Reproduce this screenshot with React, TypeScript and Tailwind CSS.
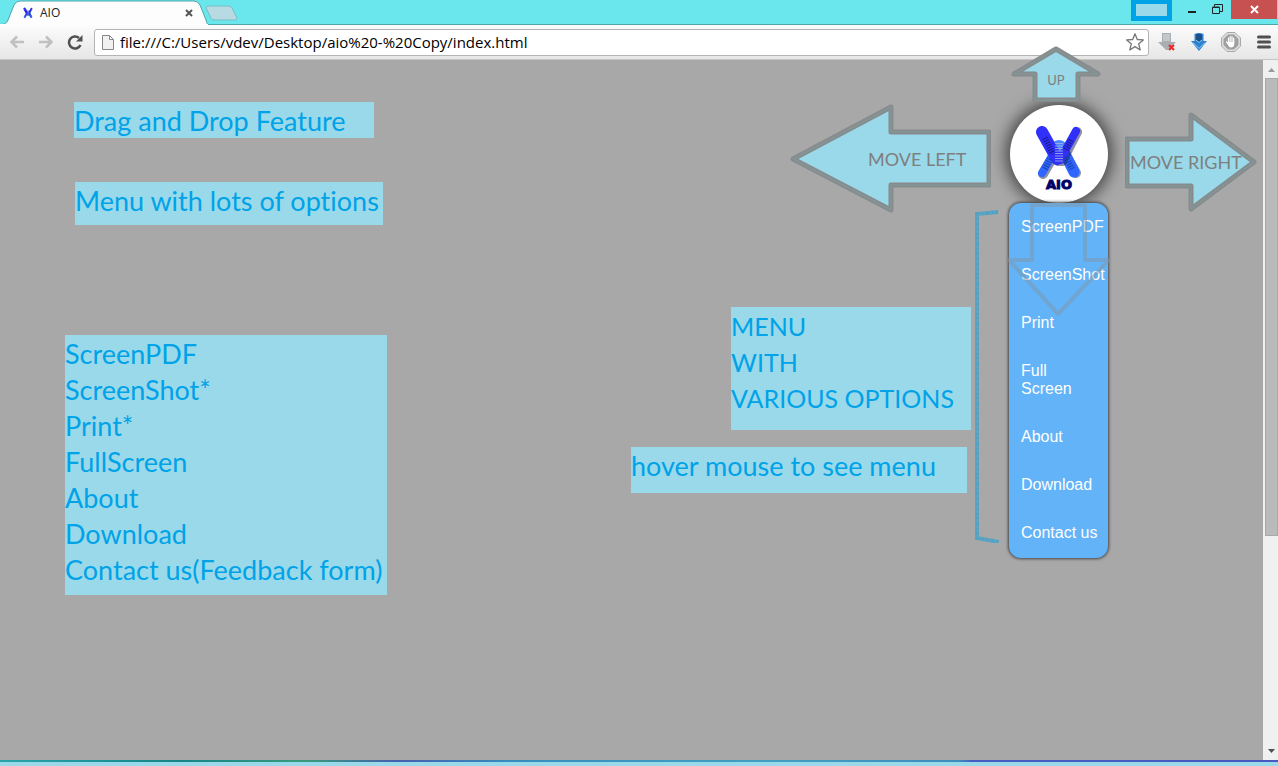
import React from "react";

const options = ["ScreenPDF", "ScreenShot", "Print", "Full Screen", "About", "Download", "Contact us"];
const features = ["ScreenPDF", "ScreenShot*", "Print*", "FullScreen", "About", "Download", "Contact us(Feedback form)"];

function Note({ className, children }: { className: string; children: React.ReactNode }) {
  return (
    <div className={`bg-[#99d9ea] pt-px font-['Lato',sans-serif] leading-9 whitespace-nowrap text-[#00a2e8] [font-variant-ligatures:none] ${className}`}>
      {children}
    </div>
  );
}

function Logo({ className, caption }: { className: string; caption?: boolean }) {
  return (
    <svg className={className} viewBox={caption ? "0 0 52 66" : "1 -2 50 58"} aria-hidden="true">
      <g strokeLinecap="round" strokeLinejoin="round" fill="none">
        <path d="M24 24L10 48M30 24L43 47" stroke="#1a2450" strokeWidth="10" opacity=".5" />
        <path d="M23 23L9 47" stroke="#2f66ff" strokeWidth="8" />
        <path d="M29 22L41 46" stroke="#2f66ff" strokeWidth="11" />
        <circle cx="26" cy="23" r="9" fill="#4a86ff" />
        <path d="M10 7L25 35M44 6L29 35" stroke="#1a1a50" strokeWidth="10" opacity=".5" />
        <path d="M9 6L24 33" stroke="#3030fa" strokeWidth="12" />
        <path d="M43 5L27 34" stroke="#3030fa" strokeWidth="8" />
        <path d="M12 12L20 28M38 14L32 25" stroke="#14146e" strokeWidth="6" strokeLinecap="butt" strokeDasharray="1 1.500" opacity=".8" />
        <path d="M26 17V36" stroke="#a9b4e4" strokeWidth="8" strokeLinecap="butt" strokeDasharray="1 1.500" opacity=".8" />
        <path d="M17 33L12 43M33 31L39 43" stroke="#173797" strokeWidth="6" strokeLinecap="butt" strokeDasharray="1 1.500" opacity=".8" />
      </g>
      {caption && (
        <text x="26" y="63" textAnchor="middle" fontFamily="DejaVu Sans" fontWeight="bold" fontSize="13" fill="#000066" stroke="#000066" strokeWidth="1">
          AIO
        </text>
      )}
    </svg>
  );
}

function TabStrip() {
  return (
    <header className="flex h-[25px] items-start border-b border-[#4fa5ad] bg-[#69e7ec] pr-px">
      <div className="relative mb-[-1px] flex h-[25px] w-52 shrink-0 items-center">
        <svg className="absolute inset-0 h-[25px] w-52" viewBox="0 0 208 25" aria-hidden="true">
          <path d="M0 24.500C5 24.500 7 23 8 20L14 5Q16 1 20 1H194Q198 1 200 5L206 20Q207 24.500 208 24.500V25H0Z" fill="#fdfdfd" stroke="#4fa5ad" />
          <path d="M0 25H208" stroke="#fdfdfd" strokeWidth="2" />
        </svg>
        <Logo className="relative ml-[23px] h-3 w-[10px]" />
        <span className="relative ml-[7px] font-['Open_Sans',sans-serif] text-xs text-[#222]">AIO</span>
        <button className="relative mr-[15px] ml-auto" aria-label="Close tab">
          <svg className="size-2" viewBox="0 0 8 8"><path d="M1 1L7 7M7 1L1 7" stroke="#555" strokeWidth="2" /></svg>
        </button>
      </div>
      <button className="mt-[5px] -ml-1" aria-label="New tab">
        <svg className="h-4 w-9" viewBox="0 0 36 16">
          <path d="M4 1H24Q27 1 28 3L33 13Q33 15 31 15H11Q8 15 7 13L2 3Q2 1 4 1Z" fill="#b8dbe3" stroke="#78bdc7" />
        </svg>
      </button>
      <div className="ml-auto flex items-start">
        <div className="h-[21px] w-[41px] border-[5px] border-t-4 border-[#00a2e8] bg-[#99d9ea]" />
        <button className="ml-4 flex h-[18px] w-2 items-center" aria-label="Minimize">
          <svg className="h-[18px] w-2" viewBox="0 0 8 18"><path d="M0 12H8" stroke="#222" strokeWidth="2" /></svg>
        </button>
        <button className="mt-1 ml-4" aria-label="Restore">
          <svg className="size-[11px]" viewBox="0 0 11 11" fill="none" stroke="#222">
            <path d="M.5 3.500H7.500V9.500H.5ZM.5 3H7.500M2.500 2.500V.5H10.500V7.500H8" />
          </svg>
        </button>
        <button className="ml-2 flex h-[19px] w-[46px] items-center justify-center bg-[#c75050]" aria-label="Close">
          <svg className="size-[9px]" viewBox="0 0 9 9"><path d="M1 1L8 8M8 1L1 8" stroke="#fff" strokeWidth="2" /></svg>
        </button>
      </div>
    </header>
  );
}

function Toolbar() {
  return (
    <div className="flex h-[35px] items-center border-b border-[#c4c4c4] bg-linear-to-b from-[#fcfcfc] to-[#e6e6e6] pr-[7px] pl-[9px]">
      <button aria-label="Back">
        <svg className="h-4 w-4" viewBox="0 0 16 16" fill="none"><path d="M8 2.500L2.500 8L8 13.500M3 8H15" stroke="#c0c0c0" strokeWidth="2.500" /></svg>
      </button>
      <button className="ml-[13px]" aria-label="Forward">
        <svg className="h-4 w-4" viewBox="0 0 16 16" fill="none"><path d="M8 2.500L13.500 8L8 13.500M13 8H1" stroke="#c0c0c0" strokeWidth="2.500" /></svg>
      </button>
      <button className="ml-[13px]" aria-label="Reload">
        <svg className="h-4 w-4" viewBox="0 0 16 16" fill="none">
          <path d="M13.500 11A6 6 0 1 1 12 4" stroke="#505050" strokeWidth="2.500" />
          <path d="M15.500 1V7.500H9Z" fill="#505050" />
        </svg>
      </button>
      <div className="ml-[11px] flex h-[27px] min-w-0 flex-1 items-center rounded-[3px] border border-[#b4b4b4] bg-white pr-1 pl-[7px]">
        <svg className="h-[15px] w-3 shrink-0" viewBox="0 0 12 15" fill="#f1f1f1" stroke="#888">
          <path d="M.5.5H7.500L11.500 4.500V14.500H.5ZM7.500.5V4.500H11.500" />
        </svg>
        <input
          aria-label="Address"
          defaultValue="file:///C:/Users/vdev/Desktop/aio%20-%20Copy/index.html"
          className="ml-[6px] min-w-0 flex-1 bg-transparent font-['Open_Sans',sans-serif] text-[15px] text-black outline-none"
        />
        <button aria-label="Bookmark this page">
          <svg className="h-[18px] w-[18px]" viewBox="0 0 18 18" fill="#fff" stroke="#777" strokeWidth="1.300" strokeLinejoin="round">
            <path d="M9 .8L11.300 6.500L17.300 6.900L12.700 10.800L14.200 17L9 13.600L3.800 17L5.300 10.800L.7 6.900L6.700 6.500Z" />
          </svg>
        </button>
      </div>
      <button className="ml-[9px]" aria-label="Downloads disabled">
        <svg className="h-[18px] w-[18px]" viewBox="0 0 18 18">
          <path d="M4 0H13V9H18L10 17H8L0 9H4Z" fill="#a9aeb2" />
          <path d="M5 1H12V8H5Z" fill="#c3c7c9" />
          <path d="M11 12L16 17M16 12L11 17" stroke="#e52929" strokeWidth="2" />
        </svg>
      </button>
      <button className="ml-[15px]" aria-label="Download">
        <svg className="h-[18px] w-4" viewBox="0 0 16 18">
          <path d="M3.500 1Q8 -1 12.500 1V8H16L8 18L0 8H3.500Z" fill="#2f7fd0" />
          <path d="M5 1.500Q8 0 11 1.500V7L8 10L5 7Z" fill="#1c4f88" />
          <path d="M5 7L8 9.500L11 7M2 9.500L8 15.500L14 9.500" fill="none" stroke="#8fd4fb" />
        </svg>
      </button>
      <button className="ml-[14px]" aria-label="Block">
        <svg className="h-5 w-5" viewBox="0 0 20 20">
          <path d="M6 .5H14L19.500 6V14L14 19.500H6L.5 14V6Z" fill="#ddd" stroke="#aaa" />
          <path d="M7 2.500H13L17.500 7V13L13 17.500H7L2.500 13V7Z" fill="#a0a0a0" />
          <path d="M7.500 10V6M9.200 9V4.500M11 9V4.500M12.700 10V6M5.500 10L8 13" stroke="#fff" strokeWidth="1.200" strokeLinecap="round" />
          <path d="M7 9.500H13.300V12Q13 15.500 10 15.500Q8 15.500 6.500 12Z" fill="#fff" />
        </svg>
      </button>
      <button className="ml-4" aria-label="Menu">
        <svg className="h-[14px] w-[14px]" viewBox="0 0 14 14"><path d="M1.500 2H12.500M1.500 7H12.500M1.500 12H12.500" stroke="#505050" strokeWidth="3" strokeLinecap="round" /></svg>
      </button>
    </div>
  );
}

function Scrollbar() {
  return (
    <div className="flex w-[15px] shrink-0 flex-col items-center bg-[#f0f0f0]">
      <svg className="mt-2 mb-[6px] ml-[2px] h-1 w-[7px]" viewBox="0 0 7 4"><path d="M0 4L3.500 0L7 4Z" fill="#999" /></svg>
      <div className="ml-[2px] h-[458px] w-[13px] border border-[#a8a8a8] bg-[#bababa]" />
      <svg className="mt-auto mb-[7px] ml-[2px] h-1 w-[7px]" viewBox="0 0 7 4"><path d="M0 0L3.500 4L7 0Z" fill="#505050" /></svg>
    </div>
  );
}

function ArrowShape({ d }: { d: string }) {
  return (
    <g strokeLinejoin="round">
      <path d={d} fill="#99d9ea" stroke="#888a8b" strokeWidth="5" />
      <path d={d} fill="none" stroke="#839497" strokeWidth="2" />
    </g>
  );
}

export default function App() {
  return (
    <div className="flex min-h-screen flex-col bg-[#a8a8a8]">
      <TabStrip />
      <Toolbar />
      <div className="flex flex-1">
        <main className="flex min-w-0 flex-1 justify-between pr-[6px] pl-[65px]">
          <section className="flex flex-col items-start pt-[42px]">
            <Note className="ml-[9px] h-9 w-[300px] text-[27px]">Drag and Drop Feature</Note>
            <Note className="mt-11 ml-[10px] h-[43px] w-[308px] text-[27px]">Menu with lots of options</Note>
            <Note className="mt-[110px] h-[260px] w-[322px] text-[27px]">
              <ul>{features.map((f) => <li key={f}>{f}</li>)}</ul>
            </Note>
          </section>

          <section className="flex items-start">
            <div className="flex flex-col items-end pt-11">
              <button className="mr-[9px] h-[106px]" aria-label="Move left">
                <svg className="h-[109px] w-[201px]" viewBox="0 0 201 109">
                  <ArrowShape d="M3 55L101 3V28H199V81H101V106Z" />
                  <text x="78" y="62" fontFamily="Lato" fontSize="18" fill="#7f7f7f">MOVE LEFT</text>
                </svg>
              </button>
              <div className="flex items-start">
                <div className="mr-1 flex flex-col items-end gap-[17px] pt-[97px]">
                  <Note className="h-[123px] w-60 text-[25px]">MENU<br />WITH<br />VARIOUS OPTIONS</Note>
                  <Note className="mr-1 h-[46px] w-[336px] text-[27px]">hover mouse to see menu</Note>
                </div>
                <svg className="h-[333px] w-[25px]" viewBox="0 0 25 333" fill="none" aria-hidden="true">
                  <path d="M23 2L2 4V328L24 332" stroke="#5fa3c0" strokeWidth="4" />
                  <path d="M23 2L2 4V328L24 332" stroke="#2ea3d8" strokeWidth="3" strokeDasharray="2 3 1 4" opacity=".5" />
                </svg>
              </div>
            </div>

            <div className="relative ml-[9px] w-[99px] pt-[45px]">
              <div className="mx-auto flex size-[98px] items-center justify-center rounded-full bg-white shadow-[0_0_16px_4px_#444]">
                <Logo className="mt-[10px] h-[66px] w-[52px]" caption />
              </div>
              <button className="absolute -top-[14px] left-[2px]" aria-label="Move up">
                <svg className="h-14 w-[90px]" viewBox="0 0 90 56">
                  <ArrowShape d="M45 3L87 28H67V54H24V28H3Z" />
                  <text x="45" y="39" textAnchor="middle" fontFamily="Lato" fontSize="13" fill="#7f7f7f">UP</text>
                </svg>
              </button>
              <nav className="relative rounded-xl bg-[#62b3f7] pt-[15px] pb-4 shadow-[0_0_3px_1px_#444]">
                <ul className="flex flex-col gap-[30px] pr-2 pl-3 font-['Liberation_Sans',sans-serif] text-base leading-[18px] text-white">
                  {options.map((o) => <li key={o}><a href="#">{o}</a></li>)}
                </ul>
              </nav>
              <svg className="pointer-events-none absolute top-[143px] -left-[3px] h-[115px] w-[105px]" viewBox="0 0 105 115" fill="none" aria-hidden="true">
                <path d="M26 2H79V57H103L52 111L3 57H26Z" stroke="#8096a8" strokeWidth="4" strokeLinejoin="round" opacity=".5" />
              </svg>
            </div>

            <button className="mt-[52px] ml-[17px]" aria-label="Move right">
              <svg className="h-[100px] w-[132px]" viewBox="0 0 132 100">
                <ArrowShape d="M2 27H66V3L129 50L66 97V74H2Z" />
                <text x="5" y="57" fontFamily="Lato" fontSize="18" fill="#7f7f7f">MOVE RIGHT</text>
              </svg>
            </button>
          </section>
        </main>
        <Scrollbar />
      </div>
      <footer className="h-[6px] border-t-2 border-[#3c9bb8] bg-[#99d9ea] [border-image:linear-gradient(90deg,#28a5aa_0%,#148488_14%,#389b7c_24%,#4660ad_31%,#368dbd_40%,#429fc0_60%,#3d8dbb_75%,#465cc0_76%,#4858be_100%)_1]" />
    </div>
  );
}
